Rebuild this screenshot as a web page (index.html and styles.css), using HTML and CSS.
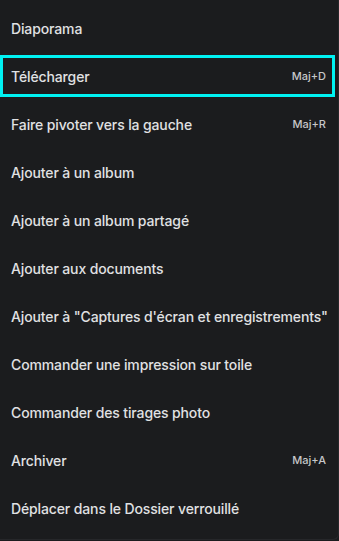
FILE: index.html
```html
<!DOCTYPE html>
<html lang="fr">
<head>
<meta charset="utf-8">
<link rel="stylesheet" href="styles.css">
</head>
<body>
<div class="menu">
  <ul class="list">
    <li class="item"><span class="label">Diaporama</span></li>
    <li class="item focused"><span class="label">Télécharger</span><span class="kbd">Maj+D</span></li>
    <li class="item"><span class="label">Faire pivoter vers la gauche</span><span class="kbd">Maj+R</span></li>
    <li class="item"><span class="label">Ajouter à un album</span></li>
    <li class="item"><span class="label">Ajouter à un album partagé</span></li>
    <li class="item"><span class="label">Ajouter aux documents</span></li>
    <li class="item"><span class="label">Ajouter à "Captures d'écran et enregistrements"</span></li>
    <li class="item"><span class="label">Commander une impression sur toile</span></li>
    <li class="item"><span class="label">Commander des tirages photo</span></li>
    <li class="item"><span class="label">Archiver</span><span class="kbd">Maj+A</span></li>
    <li class="item"><span class="label">Déplacer dans le Dossier verrouillé</span></li>
  </ul>
</div>
</body>
</html>
```
FILE: styles.css
```css
html, body {
  margin: 0;
  padding: 0;
  background: #1b1c1e;
  width: 339px;
  height: 541px;
  overflow: hidden;
}
.menu {
  box-sizing: border-box;
  width: 339px;
  height: 540px;
  background: #1b1c1e;
  border-right: 1px solid #26272a;
  border-bottom: 1px solid #26272a;
  border-bottom-right-radius: 6px;
  padding-top: 4px;
  font-family: Inter, Roboto, "Noto Sans", sans-serif;
}
.list {
  list-style: none;
  margin: 0;
  padding: 0;
}
.item {
  position: relative;
  display: flex;
  align-items: center;
  justify-content: space-between;
  height: 48px;
  padding: 0 12px 0 11px;
}
.label {
  font-size: 14px;
  font-weight: 500;
  color: #e0e1e3;
  white-space: nowrap;
  letter-spacing: -0.13px;
}
.kbd {
  font-size: 11px;
  font-weight: 500;
  color: #c6c7c9;
}
.focused::after {
  content: "";
  position: absolute;
  left: 0;
  right: 3px;
  top: 3px;
  bottom: 3px;
  border: 3px solid #00f2f2;
}
```
